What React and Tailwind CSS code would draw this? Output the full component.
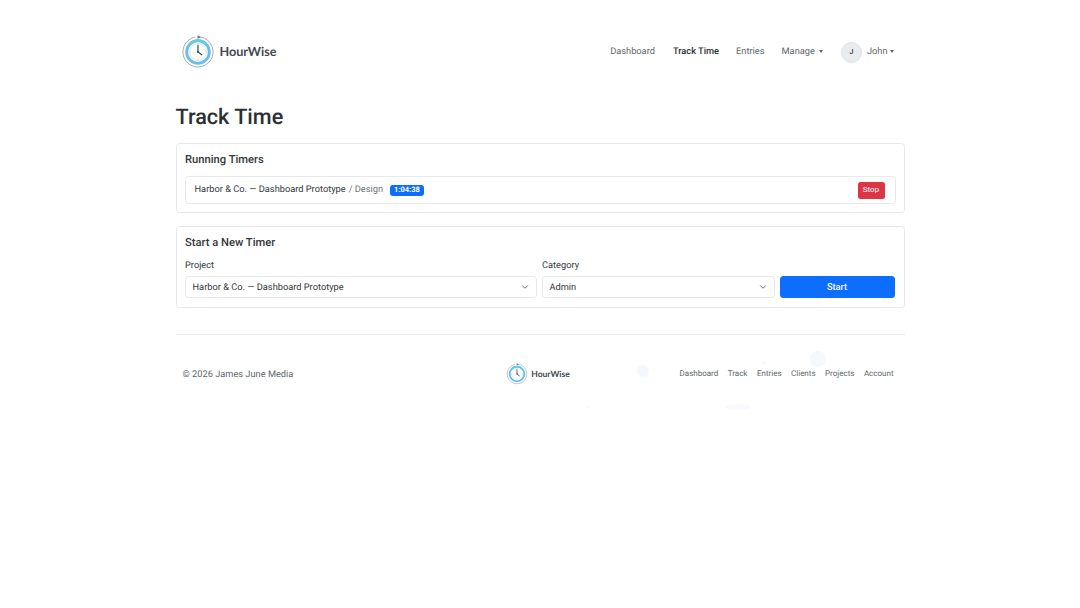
import { ChevronDown } from 'lucide-react'

const FONT = "font-['Roboto','Liberation_Sans',sans-serif] [text-rendering:geometricPrecision]"

function Logo({ size }) {
  return (
    <svg width={size} height={size} viewBox="0 0 36 36" className="shrink-0">
      <path d="M15 2.2 A16 16 0 1 0 21 2.2" fill="none" stroke="#9aa9b4" strokeWidth="1" />
      <path d="M17.5 0.4 L21.5 2.2 L17.5 4 Z" fill="#5a7688" />
      <circle cx="18" cy="18" r="12" fill="#ffffff" stroke="#6cbcec" strokeWidth="3" />
      <path d="M9.5 9.5 A12 12 0 0 1 26.5 9.5" fill="none" stroke="#66cbe2" strokeWidth="3" />
      <circle cx="18" cy="18" r="9" fill="#ffffff" stroke="#d6edf9" strokeWidth="1" />
      <path d="M18 8.8 V10.4 M18 25.6 V27.2 M8.8 18 H10.4 M25.6 18 H27.2" stroke="#9fd5f0" strokeWidth="1" />
      <path d="M18 11 L18 18 L22 21" fill="none" stroke="#3b4a55" strokeWidth="1.3" strokeLinecap="round" />
      <circle cx="18" cy="18" r="1.1" fill="#3b4a55" />
    </svg>
  )
}

function Caret({ gap }) {
  return <span className={`inline-block ${gap} align-middle w-0 h-0 border-x-[2.5px] border-x-transparent border-t-[3px] border-t-current`} />
}

function SelectBox({ value }) {
  return (
    <div className="h-[22px] flex items-center justify-between pl-[7px] pr-[6px] border border-[#e6e8eb] rounded-[3.5px] bg-white text-[9.25px] text-[#33383d]">
      <span className="pt-[1px]">{value}</span>
      <ChevronDown className="w-[10px] h-[10px] text-[#495057]" strokeWidth={2} />
    </div>
  )
}

export default function App() {
  return (
    <div className={`${FONT} relative min-h-[608px] bg-white text-[#33383d] text-[9.25px] overflow-hidden`}>
      {/* faint watermark behind the footer */}
      <svg className="absolute left-[580px] top-[335px] pointer-events-none" width="320" height="80" viewBox="0 0 320 80">
        <circle cx="63" cy="36" r="6" fill="#f4f8fe" />
        <circle cx="238" cy="24" r="8" fill="#f5f9fe" />
        <circle cx="184" cy="28" r="2" fill="#f7f9fc" />
        <ellipse cx="158" cy="72" rx="13" ry="3" fill="#f8fafd" />
        <circle cx="8" cy="72" r="1.5" fill="#f7f8fa" />
      </svg>
      <div className="relative w-[729px] mx-auto">
        <nav className="h-[103px] flex items-center justify-between pl-[5px] pr-[11px]">
          <div className="flex items-center gap-[5px]">
            <Logo size={34} />
            <span className="font-['Lato',sans-serif] font-bold text-[12.6px] pt-[1px] text-[#3f4a52]">HourWise</span>
          </div>
          <div className="flex items-center pt-[1px] text-[#62676c]">
            <a className="mr-[18px]">Dashboard</a>
            <a className="mr-[17px] text-[#2b3035] font-medium">Track Time</a>
            <a className="mr-[17px]">Entries</a>
            <a className="mr-[18px]">Manage<Caret gap="ml-[4px]" /></a>
            <span className="w-[21px] h-[21px] mr-[5px] rounded-full bg-[#e9ecef] border border-[#dee2e6] flex items-center justify-center text-[7px] font-medium text-[#343a40]">J</span>
            <a>John<Caret gap="ml-[2px]" /></a>
          </div>
        </nav>

        <h1 className="text-[21.6px] font-medium leading-[27px] text-[#2b3035] pt-[1px] mb-[12px]">Track Time</h1>

        <section className="h-[70px] border border-[#e6e8eb] rounded-[3.5px] px-[8px] pt-[9px] mb-[13px]">
          <h2 className="text-[11.2px] font-medium leading-[13px] ml-[0.5px] mb-[10px]">Running Timers</h2>
          <div className="h-[28px] border border-[#e6e8eb] rounded-[3.5px] flex items-center justify-between pl-[9px] pr-[10px]">
            <div className="flex items-center">
              <span>Harbor &amp; Co. — Dashboard Prototype</span>
              <span className="text-[#6c757d] ml-[3px]">/ Design</span>
              <span className="ml-[6.5px] h-[11px] px-[4.5px] rounded-[3px] bg-[#0d6efd] text-white text-[7.5px] font-bold flex items-center">1:04:38</span>
            </div>
            <button className="h-[17px] w-[27px] rounded-[2.5px] bg-[#dc3545] text-white text-[8px]">Stop</button>
          </div>
        </section>

        <section className="h-[82px] border border-[#e6e8eb] rounded-[3.5px] px-[8px] pt-[9px]">
          <h2 className="text-[11.2px] font-medium leading-[13px] ml-[0.5px] mb-[11px]">Start a New Timer</h2>
          <div className="grid grid-cols-[352px_233px_115px] gap-x-[5px] items-end">
            <div>
              <label className="block leading-[11px] ml-[0.5px] mb-[5px]">Project</label>
              <SelectBox value="Harbor & Co. — Dashboard Prototype" />
            </div>
            <div>
              <label className="block leading-[11px] ml-[0.5px] mb-[5px]">Category</label>
              <SelectBox value="Admin" />
            </div>
            <button className="h-[22px] rounded-[3.5px] bg-[#0d6efd] text-white font-medium">Start</button>
          </div>
        </section>

        <footer className="mt-[26px] border-t border-[#e9ebee] h-[79px] grid grid-cols-3 items-center pl-[7px] pr-[11px]">
          <span className="pt-[1px] text-[#62676c]">© 2026 James June Media</span>
          <div className="flex items-center gap-[3px] justify-center">
            <Logo size={22} />
            <span className="font-['Lato',sans-serif] font-bold text-[8.5px] text-[#3f4a52]">HourWise</span>
          </div>
          <div className="flex justify-end gap-[9.5px] text-[8px] text-[#62676c]">
            <a>Dashboard</a>
            <a>Track</a>
            <a>Entries</a>
            <a>Clients</a>
            <a>Projects</a>
            <a>Account</a>
          </div>
        </footer>
      </div>
    </div>
  )
}
